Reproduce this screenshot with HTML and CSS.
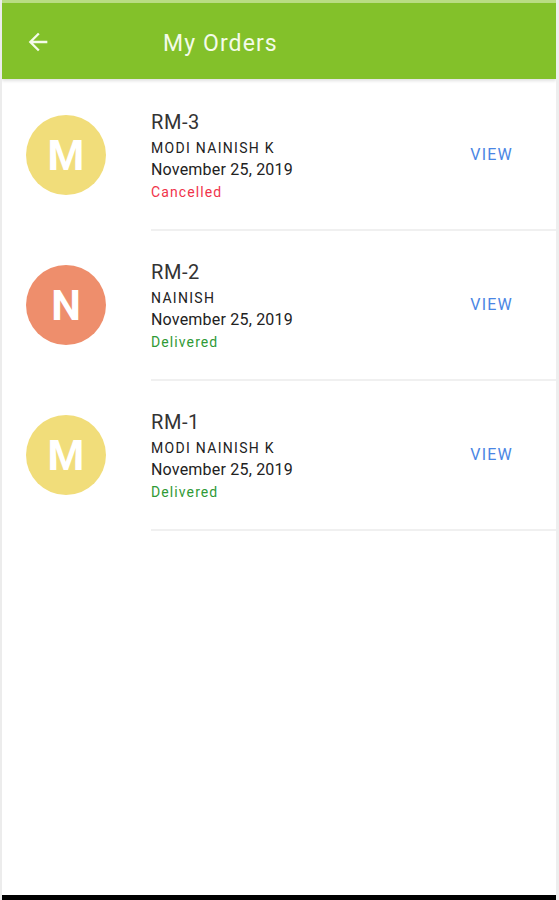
FILE: index.html
```html
<!DOCTYPE html>
<html>
<head>
    <meta charset="UTF-8">
    <title>My Orders</title>
    <link rel="stylesheet" href="styles.css">
</head>
<body>
    <div class="screen">
        <div class="status-strip"></div>
        <div class="app-bar">
            <svg class="back-icon" width="28" height="28" viewBox="0 0 24 24">
                <path d="M20 11H7.83l5.59-5.59L12 4l-8 8 8 8 1.41-1.41L7.83 13H20v-2z" fill="#f4fbe9"/>
            </svg>
            <span class="app-title">My Orders</span>
        </div>

        <div class="order-list">
            <div class="order-row">
                <div class="avatar avatar-yellow">M</div>
                <div class="order-body">
                    <div class="order-info">
                        <div class="order-id">RM-3</div>
                        <div class="order-name">MODI NAINISH K</div>
                        <div class="order-date">November 25, 2019</div>
                        <div class="order-status status-cancelled">Cancelled</div>
                    </div>
                    <a class="view-link">VIEW</a>
                </div>
            </div>
            <div class="order-row">
                <div class="avatar avatar-orange">N</div>
                <div class="order-body">
                    <div class="order-info">
                        <div class="order-id">RM-2</div>
                        <div class="order-name">NAINISH</div>
                        <div class="order-date">November 25, 2019</div>
                        <div class="order-status status-delivered">Delivered</div>
                    </div>
                    <a class="view-link">VIEW</a>
                </div>
            </div>
            <div class="order-row">
                <div class="avatar avatar-yellow">M</div>
                <div class="order-body">
                    <div class="order-info">
                        <div class="order-id">RM-1</div>
                        <div class="order-name">MODI NAINISH K</div>
                        <div class="order-date">November 25, 2019</div>
                        <div class="order-status status-delivered">Delivered</div>
                    </div>
                    <a class="view-link">VIEW</a>
                </div>
            </div>
        </div>

        <div class="spacer"></div>
        <div class="nav-bar"></div>
    </div>
</body>
</html>
```

FILE: styles.css
```css
html, body {
    margin: 0;
    padding: 0;
}

body {
    background-color: #fff;
    font-family: Roboto, "Liberation Sans", sans-serif;
    color: #222;
}

.screen {
    width: 559px;
    height: 900px;
    box-sizing: border-box;
    display: flex;
    flex-direction: column;
    border-left: 2px solid #ececec;
    border-right: 3px solid #eeeeee;
    overflow: hidden;
}

.status-strip {
    height: 3px;
    background-color: #b9dd83;
}

.app-bar {
    height: 76px;
    background-color: #83c12a;
    display: flex;
    align-items: center;
    box-shadow: 0 2px 3px rgba(0, 0, 0, 0.12);
    position: relative;
    z-index: 1;
}

.back-icon {
    margin-left: 22px;
    margin-top: 2px;
}

.app-title {
    margin-left: 111px;
    margin-top: 5px;
    color: #f4fbe9;
    font-size: 23px;
    letter-spacing: 1.1px;
}

.order-list {
    display: flex;
    flex-direction: column;
    padding-top: 2px;
}

.order-row {
    height: 150px;
    display: flex;
    align-items: stretch;
}

.avatar {
    width: 80px;
    height: 80px;
    border-radius: 50%;
    margin: 34px 0 0 24px;
    color: #fff;
    font-size: 42px;
    font-weight: bold;
    display: flex;
    align-items: center;
    justify-content: center;
    flex-shrink: 0;
}

.avatar-yellow {
    background-color: #f1dd7a;
}

.avatar-orange {
    background-color: #ee8e6c;
}

.order-body {
    flex: 1;
    margin-left: 45px;
    display: flex;
    justify-content: space-between;
    border-bottom: 2px solid #f0f0f0;
}

.order-info {
    padding-top: 29px;
}

.order-id {
    font-size: 20px;
    letter-spacing: 0.6px;
    color: #333;
    line-height: 24px;
}

.order-name {
    font-size: 14px;
    letter-spacing: 1.3px;
    color: #222;
    line-height: 22px;
    margin-top: 3px;
}

.order-date {
    font-size: 16px;
    letter-spacing: 0.2px;
    color: #222;
    line-height: 22px;
}

.order-status {
    font-size: 14px;
    letter-spacing: 1.1px;
    line-height: 22px;
}

.status-cancelled {
    color: #f0334a;
}

.status-delivered {
    color: #2f9a35;
}

.view-link {
    color: #4a86e4;
    font-size: 16px;
    letter-spacing: 1.2px;
    margin-top: 64px;
    margin-right: 43px;
}

.spacer {
    flex: 1;
}

.nav-bar {
    height: 5px;
    background-color: #000;
}
```
